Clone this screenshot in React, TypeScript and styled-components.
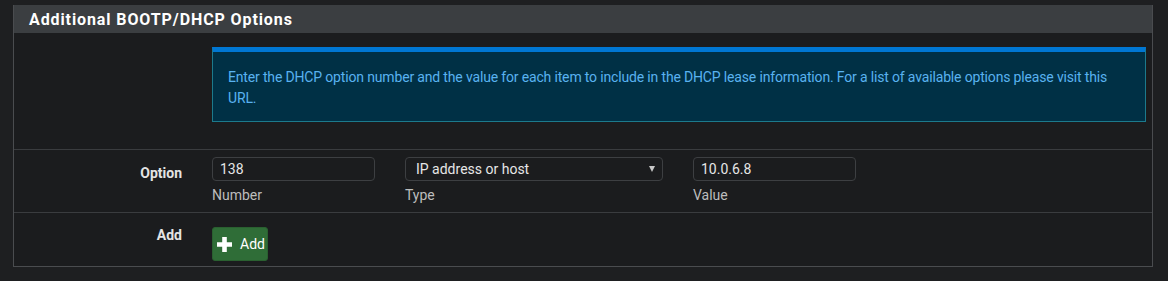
import styled, { createGlobalStyle } from "styled-components";

const GlobalStyle = createGlobalStyle`
  html, body {
    margin: 0;
    padding: 0;
    background: #1e1f21;
  }
  body {
    font-family: Roboto, "Liberation Sans", sans-serif;
    font-size: 14px;
    color: #e0e0e0;
  }
`;

const Page = styled.div`
  padding: 5px 15px 0 13px;
`;

const Panel = styled.div`
  border: 1px solid #4a4c4f;
  border-top: none;
  background: #1b1c1e;
`;

const PanelHeading = styled.div`
  background: #3b3e41;
  height: 28px;
  display: flex;
  align-items: center;
  padding-left: 15px;
  h2 {
    margin: 0;
    font-size: 16px;
    font-weight: 700;
    letter-spacing: 0.9px;
    color: #ffffff;
  }
`;

const Row = styled.div<{ $height: number; $last?: boolean }>`
  display: flex;
  height: ${(p) => p.$height}px;
  border-bottom: ${(p) => (p.$last ? "none" : "1px solid #3a3c3f")};
`;

const Label = styled.div<{ $top: number }>`
  width: 168px;
  padding-top: ${(p) => p.$top}px;
  text-align: right;
  font-weight: 700;
  font-size: 14px;
  color: #e4e4e4;
`;

const Content = styled.div<{ $top: number }>`
  flex: 1;
  padding-left: 30px;
  padding-right: 6px;
  padding-top: ${(p) => p.$top}px;
  display: flex;
  gap: 30px;
`;

const InfoBox = styled.div`
  flex: 1;
  height: 54px;
  background: #003045;
  border: 1px solid #1c7a8c;
  border-top: 5px solid #0077d3;
  padding: 15px 12px 0 15px;
  color: #59b2f0;
  font-size: 14px;
  letter-spacing: -0.16px;
  line-height: 21px;
`;

const Field = styled.div<{ $width: number }>`
  width: ${(p) => p.$width}px;
  display: flex;
  flex-direction: column;
`;

const Input = styled.div`
  height: 22px;
  border: 1px solid #3d3f42;
  border-radius: 4px;
  background: #1b1c1e;
  display: flex;
  align-items: center;
  justify-content: space-between;
  padding: 0 7px 0 7px;
  font-size: 14px;
  color: #e6e6e6;
`;

const SelectInput = styled(Input)`
  padding-left: 10px;
`;

const Arrow = styled.span`
  width: 0;
  height: 0;
  border-left: 3.5px solid transparent;
  border-right: 3.5px solid transparent;
  border-top: 6px solid #c8c8c8;
`;

const Help = styled.div`
  margin-top: 6px;
  font-size: 14px;
  color: #bdbdbd;
`;

const AddButton = styled.button`
  display: flex;
  align-items: center;
  gap: 8px;
  height: 34px;
  width: 56px;
  padding: 0 0 0 4px;
  border: 1px solid #2a6030;
  border-radius: 3px;
  background: #2f6d37;
  color: #ffffff;
  font-family: Roboto, "Liberation Sans", sans-serif;
  font-size: 14px;
  font-weight: 400;
`;

export default function App() {
  return (
    <>
      <GlobalStyle />
      <Page>
        <Panel>
          <PanelHeading>
            <h2>Additional BOOTP/DHCP Options</h2>
          </PanelHeading>
          <Row $height={116}>
            <Label $top={0} />
            <Content $top={14}>
              <InfoBox>
                Enter the DHCP option number and the value for each item to include in the DHCP lease
                information. For a list of available options please visit this URL.
              </InfoBox>
            </Content>
          </Row>
          <Row $height={62}>
            <Label $top={15}>Option</Label>
            <Content $top={7}>
              <Field $width={163}>
                <Input>138</Input>
                <Help>Number</Help>
              </Field>
              <Field $width={258}>
                <SelectInput>
                  IP address or host
                  <Arrow />
                </SelectInput>
                <Help>Type</Help>
              </Field>
              <Field $width={163}>
                <Input>10.0.6.8</Input>
                <Help>Value</Help>
              </Field>
            </Content>
          </Row>
          <Row $height={53} $last>
            <Label $top={14}>Add</Label>
            <Content $top={14}>
              <AddButton>
                <svg width="15" height="15" viewBox="0 0 15 15">
                  <path d="M5.2 0h4.6v5.2H15v4.6H9.8V15H5.2V9.8H0V5.2h5.2z" fill="#ffffff" />
                </svg>
                Add
              </AddButton>
            </Content>
          </Row>
        </Panel>
      </Page>
    </>
  );
}
